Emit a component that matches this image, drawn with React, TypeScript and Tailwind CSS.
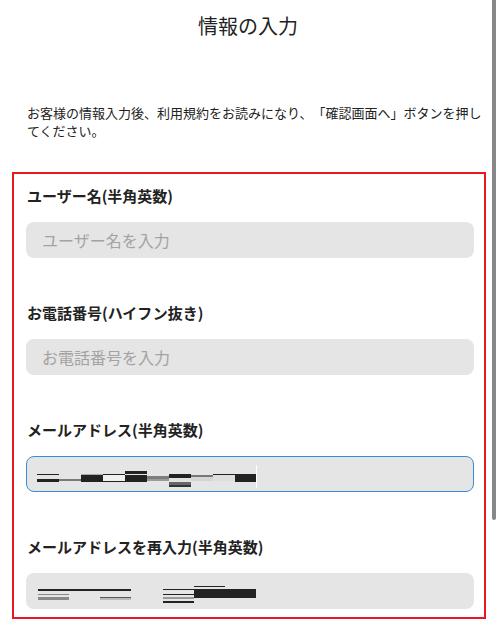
import React from "react";

type R = { x: number; y: number; w: number; h: number; c: string };

const email1: R[] = [
  { x: 11, y: 18, w: 22, h: 1, c: "#222" },
  { x: 11, y: 23, w: 22, h: 3, c: "#222" },
  { x: 33, y: 23, w: 22, h: 2, c: "#7a7a7a" },
  { x: 55, y: 18, w: 22, h: 1, c: "#aaa" },
  { x: 55, y: 19, w: 22, h: 7, c: "#222" },
  { x: 77, y: 18, w: 22, h: 1, c: "#222" },
  { x: 77, y: 19, w: 22, h: 6, c: "#f0f0f0" },
  { x: 77, y: 25, w: 22, h: 1, c: "#222" },
  { x: 99, y: 15, w: 22, h: 3, c: "#222" },
  { x: 99, y: 19, w: 22, h: 7, c: "#222" },
  { x: 121, y: 20, w: 22, h: 3, c: "#7d7d7d" },
  { x: 121, y: 23, w: 22, h: 2, c: "#9a9a9a" },
  { x: 143, y: 18, w: 22, h: 4, c: "#222" },
  { x: 143, y: 22, w: 22, h: 3, c: "#e0e0e0" },
  { x: 143, y: 26, w: 22, h: 3, c: "#666" },
  { x: 143, y: 29, w: 22, h: 2, c: "#333" },
  { x: 165, y: 19, w: 22, h: 2, c: "#777" },
  { x: 165, y: 21, w: 22, h: 4, c: "#d5d5d5" },
  { x: 187, y: 18, w: 22, h: 1, c: "#222" },
  { x: 187, y: 19, w: 22, h: 6, c: "#dedede" },
  { x: 209, y: 18, w: 21, h: 8, c: "#222" },
  { x: 230, y: 9, w: 1, h: 23, c: "#ffffff" },
];

const email2: R[] = [
  { x: 12, y: 16, w: 93, h: 2, c: "#222" },
  { x: 12, y: 21, w: 31, h: 1, c: "#888" },
  { x: 12, y: 24, w: 31, h: 3, c: "#8a8a8a" },
  { x: 74, y: 24, w: 31, h: 1, c: "#555" },
  { x: 74, y: 25, w: 31, h: 2, c: "#bbb" },
  { x: 137, y: 16, w: 31, h: 1, c: "#222" },
  { x: 137, y: 21, w: 31, h: 1, c: "#222" },
  { x: 137, y: 24, w: 31, h: 2, c: "#999" },
  { x: 137, y: 28, w: 31, h: 2, c: "#222" },
  { x: 168, y: 13, w: 31, h: 1, c: "#222" },
  { x: 168, y: 16, w: 62, h: 9, c: "#222" },
];

function Redacted({ rects }: { rects: R[] }) {
  return (
    <svg width="240" height="36" viewBox="0 0 240 36" className="block shrink-0">
      {rects.map((r, i) => (
        <rect key={i} x={r.x} y={r.y} width={r.w} height={r.h} fill={r.c} />
      ))}
    </svg>
  );
}

function Field({
  label,
  placeholder,
  rects,
  focused,
}: {
  label: string;
  placeholder?: string;
  rects?: R[];
  focused?: boolean;
}) {
  return (
    <div className="flex flex-col gap-[15px]">
      <div className="h-[22px] text-[15px] leading-[22px] font-bold text-[#222] pl-[13px]">{label}</div>
      <div
        className={
          focused
            ? "ml-[12px] w-[448px] h-[36px] rounded-[8px] bg-[#e5e5e5] border border-[#3a8dd4] flex items-stretch overflow-hidden"
            : "ml-[12px] w-[448px] h-[36px] rounded-[8px] bg-[#e5e5e5] flex items-center overflow-hidden"
        }
      >
        {rects ? (
          <div className={focused ? "-ml-px -mt-px" : ""}>
            <Redacted rects={rects} />
          </div>
        ) : (
          <span className="pl-[16px] text-[16px] leading-[22px] text-[#a3a3a3]">{placeholder}</span>
        )}
      </div>
    </div>
  );
}

export default function App() {
  return (
    <div className="relative w-[500px] h-[630px] overflow-hidden bg-white font-['Noto_Sans_CJK_JP',sans-serif] text-[#222] [text-spacing-trim:space-all]">
      <div className="w-[496px] flex flex-col">
        <h1 className="pt-[12px] text-[20px] leading-[28px] text-center font-normal">情報の入力</h1>
        <p className="mt-[64px] ml-[27px] w-[461px] text-[13px] leading-[18px] [text-spacing-trim:space-all]">
          お客様の情報入力後、利用規約をお読みになり、「確認画面へ」ボタンを押してください。
        </p>
        <div className="mt-[32px] ml-[12px] w-[474px] border-2 border-[#e5191f] pt-[11px] pb-[8px] flex flex-col gap-[44px]">
          <Field label="ユーザー名(半角英数)" placeholder="ユーザー名を入力" />
          <Field label="お電話番号(ハイフン抜き)" placeholder="お電話番号を入力" />
          <Field label="メールアドレス(半角英数)" rects={email1} focused />
          <Field label="メールアドレスを再入力(半角英数)" rects={email2} />
        </div>
      </div>
      <div className="absolute right-[4px] top-0 w-[4px] h-[520px] bg-[#888] rounded-b-[2px]" />
    </div>
  );
}
